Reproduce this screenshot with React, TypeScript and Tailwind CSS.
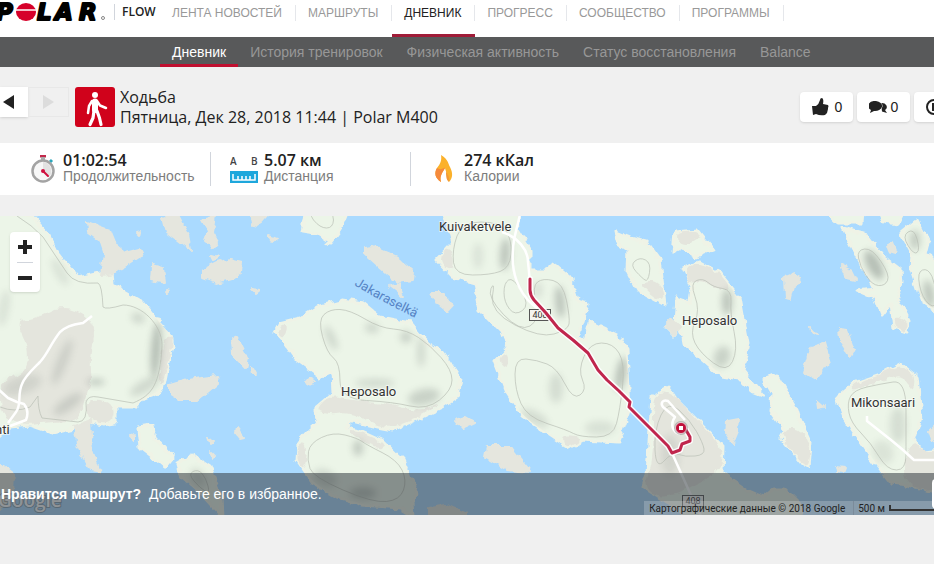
import React, { useState } from "react"
import clsx from "clsx"

const NAV = ["ЛЕНТА НОВОСТЕЙ", "МАРШРУТЫ", "ДНЕВНИК", "ПРОГРЕСС", "СООБЩЕСТВО", "ПРОГРАММЫ"]
const SUB_NAV = [
  "Дневник",
  "История тренировок",
  "Физическая активность",
  "Статус восстановления",
  "Balance",
]

// Map geometry, one "x,y x,y ..." ring per island
const LAND = [
  "-6,210 32,216 47,233 57,253 78,278 100,273 112,270 113,285 143,302 160,323 171,335 173,347 167,370 163,390 143,398 135,407 115,407 115,423 103,425 90,422 74,428 53,433 30,425 10,427 0,437 -6,440",
  "275,332 280,323 300,318 317,307 343,300 363,303 380,317 410,323 427,343 443,353 460,377 457,397 443,407 422,417 393,430 377,427 352,421 345,427 360,430 382,440 403,460 410,477 417,487 412,503 413,516 400,508 363,505 337,497 313,483 297,460 298,443 310,430 318,423 313,410 333,393 332,372 320,377 297,360 285,343",
  "444,212 453,243 437,260 453,277 475,283 480,310 502,332 508,347 495,362 507,393 523,417 557,440 570,448 583,440 618,442 630,410 627,350 617,335 590,322 585,341 578,337 588,303 577,300 570,277 552,262 548,270 530,270 530,250 518,230 517,212",
  "615,232 630,238 647,242 660,260 665,305 637,290 627,270 628,250 618,243",
  "683,268 700,262 720,273 740,298 748,343 743,370 763,395 750,390 740,380 723,377 700,357 683,343 680,327 673,335 665,327 675,322 677,298 690,303 692,288",
  "675,232 697,230 713,250 697,257 683,248 673,253",
  "763,380 777,375 797,410 799,417 811,443 809,467 802,463 781,437 785,430 770,410 772,395",
  "652,397 668,388 677,400 697,420 723,447 722,473 747,490 763,497 774,488 784,488 801,505 803,520 690,520 663,500 643,487 647,473",
  "825,212 864,212 863,223 837,223",
  "877,212 904,212 898,224 884,222",
  "842,228 867,235 884,257 901,270 902,282 897,297 909,320 907,332 894,328 891,303 882,315 876,298 857,290 874,288 857,257",
  "901,233 917,220 929,243 926,255 940,263 940,313 921,300 911,270 912,253",
  "837,397 854,383 884,373 901,364 917,377 921,417 914,440 924,452 940,450 940,493 907,485 891,483 871,457 844,417",
  "305,212 347,212 340,230 330,243 315,233 302,231",
  "178,463 192,455 210,467 222,497 223,518 213,507 200,493 182,477",
  "138,427 152,425 155,438 173,458 165,468 158,462 140,448",
]

const ROCKS = [
  "88,222 110,230 117,247 125,253 140,249 143,255 115,273 101,275 104,252 100,240 89,232",
  "74,426 90,420 92,450 100,472 90,470 78,447",
  "163,218 177,214 188,235 191,250 180,242 167,232",
  "202,220 215,216 212,232 218,242 213,248 205,242 208,230",
  "203,270 217,263 230,259 242,262 241,273 231,279 217,283 203,278",
  "153,265 163,268 165,283 152,280",
  "170,385 187,380 217,376 218,382 197,400 181,400 170,393",
  "232,340 237,338 248,360 246,368 233,354",
  "236,428 243,437 239,438 235,433",
  "252,367 256,374 253,374",
  "304,383 311,379 315,381 307,385",
  "252,289 260,290 256,293",
  "269,235 277,238 273,241",
  "251,212 270,212 260,223 254,227",
  "365,248 373,247 397,258 414,272 413,280 397,282 383,270 365,254",
  "390,286 400,284 403,297 398,292",
  "432,293 443,293 452,307 448,312 437,303",
  "430,508 447,505 467,514 467,520 430,520",
  "455,420 465,417 475,423 462,429",
  "487,447 510,447 530,472 507,470 485,457",
  "665,327 672,320 680,328 673,335",
  "727,422 738,420 737,430 732,442 726,433",
  "887,245 892,243 896,253 889,251",
  "842,266 851,270 856,280 847,278",
  "784,278 796,273 801,283 792,290 790,299 785,298",
  "811,347 824,343 829,360 816,380 803,372",
  "839,330 847,331 854,350 850,357 841,343",
  "811,328 818,336 813,333",
  "817,401 824,407 818,408",
  "836,466 845,467 843,472 837,471",
  "929,432 936,425 940,445 932,440",
  "-4,460 0,463 13,473 12,493 0,510 -4,510",
  "136,233 140,232 139,236",
  "166,291 170,292 168,294",
  "211,256 218,258 213,260",
  "130,437 134,434 134,441",
  "208,437 213,441 210,443",
  "212,452 216,456 213,457",
]

// Bare ground on the bigger islands
const BEIGE = [
  "14,320 36,319 60,306 84,312 96,330 90,360 92,380 86,398 80,420 50,422 20,425 0,415 0,380 25,375 30,350",
  "88,398 112,402 113,422 100,424 86,418",
  "315,411 328,396 350,400 380,402 420,412 442,402 420,417 393,428 375,425 350,412 330,415",
  "277,333 281,324 288,326 284,338",
  "298,443 308,444 305,470 297,462",
  "350,428 382,440 384,450 366,444 350,434",
  "437,260 452,244 455,275",
  "497,360 508,350 508,370",
  "557,436 583,437 570,448",
  "685,268 700,262 720,273 732,290 714,288 703,280 687,284",
  "637,282 661,280 665,305",
  "675,232 697,230 700,240 680,246",
  "785,430 797,428 811,443 809,467 802,463 781,437",
  "652,397 668,388 697,420 723,447 722,473 663,500 643,487 654,460",
  "894,315 908,320 907,332 894,328",
  "854,383 884,373 901,364 916,377 912,390 901,374 884,380 850,392",
  "914,440 924,452 940,450 940,493 905,485 905,455",
  "163,340 172,335 173,347 165,375 160,388 158,378",
]

const CONTOURS = [
  "318,320 330,309 350,310 380,328 407,330 430,345 452,370 452,390 427,410 393,402 340,399 340,363 327,353",
  "310,443 333,432 357,438 367,445 397,460 407,480 400,500 373,503 313,477 307,460",
  "452,250 462,222 500,222 512,240 510,268 490,275 455,275",
  "504,283 513,277 530,305 515,316 504,302",
  "515,358 537,360 557,368 573,400 587,390 578,370 590,343 613,343 625,363 620,410 613,437 580,437 567,430 527,417 515,390",
  "487,297 495,280 490,312 540,338 568,330 570,318 563,283 543,278 532,286 540,320 520,332",
  "630,265 640,257 651,263 648,282 642,278",
  "690,283 703,278 713,287 732,290 730,313 738,350 727,373 700,353 690,333 700,310",
  "668,400 690,420 703,443 705,455 685,457 672,452 656,470 654,430",
  "857,250 872,248 890,275 885,286 872,285 860,266",
  "902,236 914,228 920,250 914,255",
  "917,272 928,268 936,285 936,310 922,298",
  "847,403 854,390 880,384 906,380 906,440 906,470 887,470 871,443 851,423",
  "307,212 334,212 333,228 320,228",
  "188,474 198,469 206,478 210,494 200,488",
]

const SHADES = [
  { cx: 156, cy: 350, rx: 5, ry: 28, rotate: 4, o: 0.4 },
  { cx: 145, cy: 386, rx: 17, ry: 6, rotate: -30, o: 0.2 },
  { cx: 138, cy: 318, rx: 7, ry: 5, rotate: 20, o: 0.22 },
  { cx: 96, cy: 382, rx: 9, ry: 3, rotate: 0, o: 0.35 },
  { cx: 62, cy: 362, rx: 5, ry: 24, rotate: 22, o: 0.18 },
  { cx: 68, cy: 404, rx: 17, ry: 6, rotate: -35, o: 0.2 },
  { cx: 22, cy: 385, rx: 20, ry: 9, rotate: -18, o: 0.14 },
  { cx: 60, cy: 272, rx: 5, ry: 15, rotate: -30, o: 0.13 },
  { cx: 4, cy: 308, rx: 5, ry: 18, rotate: 10, o: 0.13 },
  { cx: 331, cy: 338, rx: 4, ry: 13, rotate: -25, o: 0.22 },
  { cx: 372, cy: 328, rx: 7, ry: 5, rotate: 10, o: 0.22 },
  { cx: 406, cy: 337, rx: 6, ry: 6, rotate: 0, o: 0.25 },
  { cx: 421, cy: 352, rx: 4, ry: 15, rotate: 0, o: 0.2 },
  { cx: 424, cy: 397, rx: 16, ry: 8, rotate: -12, o: 0.25 },
  { cx: 375, cy: 383, rx: 20, ry: 4, rotate: 0, o: 0.2 },
  { cx: 358, cy: 448, rx: 5, ry: 8, rotate: 0, o: 0.3 },
  { cx: 325, cy: 478, rx: 12, ry: 8, rotate: 25, o: 0.2 },
  { cx: 363, cy: 493, rx: 13, ry: 6, rotate: 0, o: 0.3 },
  { cx: 505, cy: 254, rx: 5, ry: 16, rotate: 4, o: 0.35 },
  { cx: 478, cy: 256, rx: 5, ry: 13, rotate: 0, o: 0.12 },
  { cx: 560, cy: 302, rx: 5, ry: 16, rotate: -5, o: 0.35 },
  { cx: 538, cy: 290, rx: 4, ry: 8, rotate: 0, o: 0.16 },
  { cx: 621, cy: 374, rx: 5, ry: 17, rotate: 10, o: 0.38 },
  { cx: 556, cy: 388, rx: 7, ry: 15, rotate: 0, o: 0.17 },
  { cx: 535, cy: 418, rx: 15, ry: 6, rotate: 30, o: 0.18 },
  { cx: 600, cy: 428, rx: 15, ry: 7, rotate: 0, o: 0.14 },
  { cx: 727, cy: 302, rx: 5, ry: 13, rotate: 0, o: 0.35 },
  { cx: 722, cy: 357, rx: 8, ry: 11, rotate: 20, o: 0.25 },
  { cx: 670, cy: 455, rx: 9, ry: 20, rotate: 0, o: 0.13 },
  { cx: 874, cy: 265, rx: 7, ry: 16, rotate: -28, o: 0.4 },
  { cx: 915, cy: 240, rx: 5, ry: 10, rotate: 0, o: 0.3 },
  { cx: 929, cy: 294, rx: 5, ry: 14, rotate: -10, o: 0.35 },
  { cx: 898, cy: 425, rx: 8, ry: 18, rotate: 0, o: 0.16 },
  { cx: 883, cy: 452, rx: 10, ry: 12, rotate: -30, o: 0.12 },
  { cx: 198, cy: 478, rx: 6, ry: 10, rotate: -30, o: 0.2 },
  { cx: 517, cy: 461, rx: 7, ry: 6, rotate: 0, o: 0.15 },
]

const ROADS = [
  "M92 316 83 323C70 325 66 327 60 332C50 345 48 353 40 362C32 370 25 376 22 384C17 395 22 404 16 412L8 423",
  "M-2 389 8 398 17 402 24 404C28 409 28 415 26 420L10 426",
  "M520 214C517 230 513 238 513 250C511 272 518 292 533 305L545 314",
  "M502 232C518 237 528 250 528 262L530 282",
  "M672 453 690 493 702 518",
  "M685 420 668 401C663 399 660 403 663 407L675 417C670 424 672 432 680 434",
  "M867 416V421L891 440 903 450 914 460H936",
]

const ROUTE =
  "M530 279V290Q530 295 534 300L546 313 558 328 573 340 588 353 598 370 607 380 619 391 630 402 629 407 650 428 668 446 672 453 680 450 682 444 690 441V437L686 430 681 428"

const toSmoothPath = (ring: string) => {
  const pts = ring.split(" ").map((p) => p.split(",").map(Number))
  const mid = (a: number[], b: number[]) => `${(a[0] + b[0]) / 2} ${(a[1] + b[1]) / 2}`
  const start = mid(pts[pts.length - 1], pts[0])
  const curves = pts.map((p, i) => `Q${p[0]} ${p[1]} ${mid(p, pts[(i + 1) % pts.length])}`)
  return `M${start}${curves.join("")}Z`
}

const PolarLogo = () => (
  <svg
    className="block h-6 w-[108px] shrink-0 overflow-hidden"
    viewBox="0 0 108 24"
    role="img"
    aria-label="Polar"
  >
    <g
      fontFamily="DejaVu Sans, sans-serif"
      fontWeight="bold"
      fontStyle="italic"
      fontSize="23"
      stroke="#000"
      strokeWidth="2"
      strokeLinejoin="round"
    >
      <text x="-4" y="20">P</text>
      <text x="37" y="20">L</text>
      <text x="55" y="20">A</text>
      <text x="79" y="20">R</text>
    </g>
    <ellipse cx="26" cy="12" rx="10" ry="9" fill="#d6002a" />
    <path d="M15 10h22" stroke="#fff" strokeWidth="1.500" />
    <circle cx="103" cy="18" r="1.500" fill="none" stroke="#888" />
  </svg>
)

const WalkIcon = () => (
  <svg className="h-10 w-10 shrink-0" viewBox="0 0 40 40" aria-hidden="true">
    <rect width="40" height="40" rx="3" fill="#d0021b" />
    <circle cx="20" cy="8" r="3" fill="#fff" />
    <g fill="none" stroke="#fff" strokeLinecap="round" strokeLinejoin="round">
      <path d="M20 14.500V23" strokeWidth="6" />
      <path d="M17 14 14 19 13 26" strokeWidth="2.500" />
      <path d="M22 14 25 18.500 31 21" strokeWidth="2.500" />
      <path d="M22 24 24.500 31 26 37.500" strokeWidth="3.200" />
      <path d="M19 24 18 31 15 37.500" strokeWidth="3.200" />
    </g>
  </svg>
)

const StopwatchIcon = () => (
  <svg className="h-7 w-6 shrink-0" viewBox="0 0 24 28" aria-hidden="true">
    <path d="M9 1h6" stroke="#c2284b" strokeWidth="3" />
    <path d="M12 2v4" stroke="#aaa" strokeWidth="4" />
    <path d="M19 7l2-2" stroke="#2ba6bb" strokeWidth="3" />
    <circle cx="12" cy="16" r="10.500" fill="#f7f7f7" stroke="#a3a3a3" strokeWidth="2.500" />
    <path d="M12 7v9l6 6a9 9 0 0 0-6-15" fill="#e2e2e2" />
    <path d="M12 16l5 5" stroke="#d0103f" strokeWidth="2" strokeLinecap="round" />
    <circle cx="12" cy="16" r="2" fill="#d0103f" />
  </svg>
)

const DistanceIcon = () => (
  <svg className="h-7 w-7 shrink-0" viewBox="0 0 28 28" aria-hidden="true">
    <g fontFamily="Open Sans, sans-serif" fontWeight="600" fontSize="10" fill="#444">
      <text x="0" y="10">A</text>
      <text x="21" y="10">B</text>
    </g>
    <rect y="16" width="28" height="12" fill="#1ea7dc" />
    <path d="M3 19v6h22v-6M8 21v4M12 21v4M16 21v4M20 21v4" fill="none" stroke="#fff" strokeWidth="1.500" />
  </svg>
)

const FlameIcon = () => (
  <svg className="h-7 w-5 shrink-0" viewBox="0 0 20 28" aria-hidden="true">
    <path
      d="M7 0C15 5 14 9 16 12C19 18 19 23 15 27C15 22 12 18 11 13C9 17 5 21 7 27C1 23 0 18 3 13C6 9 8 6 7 0Z"
      fill="#fbb12b"
    />
    <path d="M3 13C8 16 10 12 11 13C9 17 5 21 7 27C1 23 0 18 3 13Z" fill="#f58a3c" />
    <path d="M12 16C14 20 16 22 15 27C12 25 12 20 12 16Z" fill="#f39a35" />
  </svg>
)

const ThumbIcon = () => (
  <svg className="h-[18px] w-[18px]" viewBox="0 0 18 18" fill="#222" aria-hidden="true">
    <path d="M1 8 5 8Q8 6 9 2Q9 0 11 0Q13 1 12 6L17 7Q18 8 17 10V11L16.500 13 16 15 14 17Q9 18 5 16L2 17Z" />
  </svg>
)

const CommentsIcon = () => (
  <svg className="h-3 w-[18px]" viewBox="0 0 18 12" fill="#222" aria-hidden="true">
    <path d="M12 2A5 4 0 0 1 16 9L18 12 13 10.500Z" />
    <path
      d="M7 0A7 5 0 1 1 5 10L1 12 2 9A7 5 0 0 1 7 0Z"
      stroke="#fff"
      strokeWidth="1"
      paintOrder="stroke"
    />
  </svg>
)

const RouteMap = () => (
  <svg
    className="absolute inset-0 h-full w-full font-[Roboto,sans-serif]"
    viewBox="0 216 934 299"
    preserveAspectRatio="xMinYMin slice"
    role="img"
    aria-label="Маршрут на карте"
  >
    <defs>
      <filter
        id="coast"
        x="-5%"
        y="-5%"
        width="110%"
        height="110%"
        colorInterpolationFilters="sRGB"
      >
        <feTurbulence type="fractalNoise" baseFrequency="0.12" numOctaves="2" seed="4" />
        <feDisplacementMap in="SourceGraphic" scale="7" xChannelSelector="R" yChannelSelector="G" />
      </filter>
      <filter id="relief" x="-100%" y="-100%" width="300%" height="300%">
        <feGaussianBlur stdDeviation="3.500" />
      </filter>
      <clipPath id="land">
        {LAND.map((ring) => (
          <path key={ring} d={toSmoothPath(ring)} />
        ))}
      </clipPath>
      <path id="strait" d="M354 285Q382 302 422 321" />
    </defs>
    <rect y="216" width="934" height="299" fill="#aadaff" />
    <g filter="url(#coast)">
      <g fill="#ecf5e8" stroke="#eff3e6" strokeWidth="3" strokeLinejoin="round">
        {LAND.map((ring) => (
          <polygon key={ring} points={ring} />
        ))}
      </g>
      <g fill="#e5e6de" stroke="#e5e6de" strokeWidth="2" strokeLinejoin="round">
        {ROCKS.map((ring) => (
          <polygon key={ring} points={ring} />
        ))}
      </g>
      <g fill="#e3e2da" fillOpacity=".85">
        {BEIGE.map((ring) => (
          <path key={ring} d={toSmoothPath(ring)} />
        ))}
      </g>
    </g>
    <g clipPath="url(#land)">
      {SHADES.map((s) => (
        <ellipse
          key={`${s.cx}-${s.cy}`}
          cx={s.cx}
          cy={s.cy}
          rx={s.rx}
          ry={s.ry}
          fill="#66706c"
          opacity={s.o}
          filter="url(#relief)"
          transform={`rotate(${s.rotate} ${s.cx} ${s.cy})`}
        />
      ))}
    </g>
    <g fill="none" stroke="#b9bfb5" strokeWidth=".7">
      {CONTOURS.map((ring) => (
        <path key={ring} d={toSmoothPath(ring)} />
      ))}
      <path d="M17 216Q32 225 43 237L67 273Q75 285 98 283Q102 285 103 307Q106 310 123 305C142 305 162 325 162 345C160 385 152 395 133 403L98 397Q88 395 86 402Q88 422 78 422L42 418Q38 410 38 396L30 407Q15 413 0 407" />
    </g>
    <g fill="none" stroke="#fff" strokeWidth="2.500" strokeLinejoin="round">
      {ROADS.map((d) => (
        <path key={d} d={d} />
      ))}
    </g>
    <g fill="#f4f4f0" stroke="#555">
      <rect x="529.500" y="309.500" width="21" height="11" />
      <rect x="682.500" y="495.500" width="21" height="11" />
    </g>
    <g fontSize="9" fill="#333" textAnchor="middle">
      <text x="540" y="318">408</text>
      <text x="693" y="504">408</text>
    </g>
    <g fill="none" strokeLinejoin="round" strokeLinecap="round">
      <path d={ROUTE} stroke="#fff" strokeWidth="6" opacity=".9" />
      <path d={ROUTE} stroke="#c0264d" strokeWidth="3" />
    </g>
    <circle cx="681" cy="428" r="7" fill="#888" fillOpacity=".5" />
    <circle cx="681" cy="428" r="5.500" fill="#c0103a" stroke="#fff" strokeOpacity=".6" />
    <rect x="679" y="426" width="4" height="4" fill="#fff" />
    <g fontSize="13" fill="#333" stroke="#fff" strokeOpacity=".5" strokeWidth="2" paintOrder="stroke">
      <text x="439" y="231">Kuivaketvele</text>
      <text x="341" y="396">Heposalo</text>
      <text x="682" y="325">Heposalo</text>
      <text x="851" y="407">Mikonsaari</text>
      <text x="-19" y="434">Lahti</text>
    </g>
    <text fontSize="13" fill="#5583c4">
      <textPath href="#strait">Jakaraselkä</textPath>
    </text>
    <text
      x="-2"
      y="507"
      fontSize="19"
      fontFamily="Open Sans, sans-serif"
      fontWeight="600"
      fill="#fff"
      stroke="#666"
      strokeOpacity=".5"
      strokeWidth="2"
      paintOrder="stroke"
    >
      Google
    </text>
  </svg>
)

type StatProps = { icon: React.ReactNode; value: string; label: string; divided?: boolean }
const Stat = ({ icon, value, label, divided }: StatProps) => (
  <div className={clsx("flex items-center", divided && "border-l border-gray-300 pl-[19px]")}>
    {icon}
    <dl className={clsx("flex flex-col pb-0.5", divided ? "ml-1.5" : "ml-2")}>
      <dt className="order-2 text-sm leading-4 text-[#7d7d7d]">{label}</dt>
      <dd className="font-['Open_Sans',sans-serif] text-base leading-4 font-semibold text-[#222]">
        {value}
      </dd>
    </dl>
  </div>
)

export default function App() {
  const [section, setSection] = useState("ДНЕВНИК")
  const [tab, setTab] = useState("Дневник")

  return (
    <div className="min-h-screen overflow-hidden bg-[#f0f0f0] font-['Liberation_Sans',sans-serif] text-[#222]">
      <header className="flex h-[37px] items-start bg-white">
        <a href="#home" className="flex w-[160px] shrink-0 items-start">
          <PolarLogo />
          <span className="ml-1.5 mt-1 flex h-4 items-center border-l border-gray-300 pl-[7px] font-['Open_Sans',sans-serif] text-xs font-semibold">
            FLOW
          </span>
        </a>
        <nav className="flex h-full">
          {NAV.map((item) => (
            <a
              key={item}
              href="#section"
              onClick={() => setSection(item)}
              className={clsx(
                "h-full whitespace-nowrap pt-[5px] text-xs",
                item === section
                  ? "border-b-3 border-[#a01c38] text-[#222]"
                  : "text-[#999]"
              )}
            >
              <span className="block border-r border-gray-200 pl-3 pr-[13px] leading-4">{item}</span>
            </a>
          ))}
        </nav>
      </header>

      <nav className="flex h-[30px] bg-[#58595a] pl-[160px]">
        {SUB_NAV.map((item) => (
          <a
            key={item}
            href="#tab"
            onClick={() => setTab(item)}
            className={clsx(
              "whitespace-nowrap px-3 text-sm leading-[30px]",
              item === tab ? "border-b-3 border-[#c01030] text-white" : "text-[#979797]"
            )}
          >
            {item}
          </a>
        ))}
      </nav>

      <div className="flex h-[76px] items-start pt-5">
        <div className="mr-1.5 flex shrink-0">
          <button
            aria-label="Предыдущая"
            className="flex h-[30px] w-7 items-center bg-white pl-[3px] shadow-sm"
          >
            <svg className="h-3.5 w-[11px]" viewBox="0 0 11 14">
              <path d="M0 7 11 0v14z" fill="#222" />
            </svg>
          </button>
          <button
            aria-label="Следующая"
            disabled
            className="flex h-[30px] w-[41px] items-center justify-center border border-[#e8e8e8]"
          >
            <svg className="h-3.5 w-[11px]" viewBox="0 0 11 14">
              <path d="M0 0 11 7 0 14z" fill="#dcdcdc" />
            </svg>
          </button>
        </div>
        <WalkIcon />
        <h1 className="ml-[5px] whitespace-nowrap font-['Open_Sans',sans-serif] text-base leading-5">
          Ходьба
          <br />
          Пятница, Дек 28, 2018 11:44 | Polar M400
        </h1>
        <div className="-mr-[33px] ml-auto mt-[5px] flex shrink-0 gap-1 text-sm">
          <button
            aria-label="Нравится"
            className="flex h-[30px] w-[53px] items-center justify-center gap-1.5 rounded bg-white shadow-sm"
          >
            <ThumbIcon />0
          </button>
          <button
            aria-label="Комментарии"
            className="flex h-[30px] w-[53px] items-center justify-center gap-1 rounded bg-white shadow-sm"
          >
            <CommentsIcon />0
          </button>
          <button
            aria-label="Доступ"
            className="h-[30px] w-[53px] rounded bg-white pl-3 shadow-sm"
          >
            <svg className="h-4 w-4" viewBox="0 0 16 16" fill="none" stroke="#222" strokeWidth="2">
              <circle cx="8" cy="8" r="7" />
              <path d="M7 12V5h3v3H7" />
            </svg>
          </button>
        </div>
      </div>

      <section className="flex h-[52px] items-center whitespace-nowrap bg-white pl-[31px]">
        <div className="w-[179px]">
          <Stat icon={<StopwatchIcon />} value="01:02:54" label="Продолжительность" />
        </div>
        <div className="w-[200px]">
          <Stat divided icon={<DistanceIcon />} value="5.07 км" label="Дистанция" />
        </div>
        <Stat
          divided
          icon={<span className="flex w-7 justify-center"><FlameIcon /></span>}
          value="274 кКал"
          label="Калории"
        />
      </section>

      <section className="relative mt-[21px] h-[299px] overflow-hidden">
        <RouteMap />
        <div className="absolute left-2.5 top-4 flex w-[30px] flex-col items-center rounded-sm bg-white shadow-sm">
          <button aria-label="Приблизить" className="flex h-[30px] w-full items-center justify-center">
            <svg className="h-3.5 w-3.5" viewBox="0 0 14 14" stroke="#222" strokeWidth="4">
              <path d="M7 0v14M0 7h14" />
            </svg>
          </button>
          <span className="h-px w-4 bg-gray-300" />
          <button aria-label="Отдалить" className="flex h-[29px] w-full items-center justify-center">
            <svg className="h-3.5 w-3.5" viewBox="0 0 14 14" stroke="#222" strokeWidth="4">
              <path d="M0 7h14" />
            </svg>
          </button>
        </div>
        <div className="absolute inset-x-0 bottom-0 flex h-[42px] items-center bg-[#333a40]/55 pl-px text-sm text-white">
          <strong>Нравится маршрут?</strong>
          <span className="ml-2">Добавьте его в избранное.</span>
          <button aria-label="В избранное" className="-mr-7 ml-auto h-[30px] w-[30px] rounded bg-white" />
        </div>
        <div className="absolute bottom-0 right-0 flex h-3.5 items-center bg-white/20 pl-[5px] font-[Roboto,sans-serif] text-[10px] text-[#222]">
          <span>Картографические данные © 2018 Google</span>
          <span className="ml-2 border-l border-gray-500/40 pl-1">500 м</span>
          <span className="ml-1 h-1.5 w-[45px] border-b-2 border-l-2 border-[#333]" />
        </div>
      </section>
    </div>
  )
}
